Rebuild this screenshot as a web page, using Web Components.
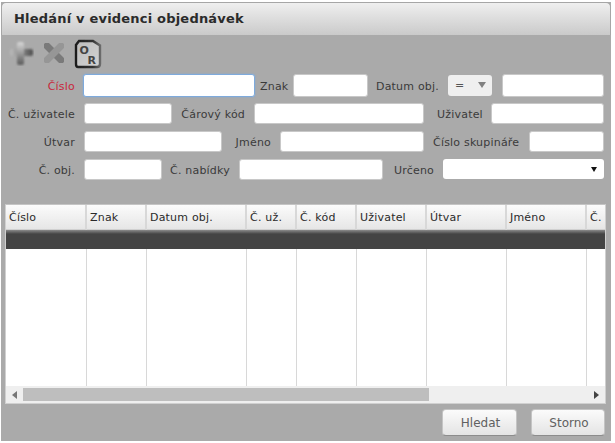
<!DOCTYPE html>
<html>
<head>
<meta charset="utf-8">
<style>
html, body { margin: 0; padding: 0; background: #fff; }
body { font-family: "DejaVu Sans", sans-serif; font-size: 11px; letter-spacing: 0.2px; color: #3a3a3a; }
</style>
</head>
<body>
<search-dialog caption="Hledání v evidenci objednávek">
    <icon-toolbar></icon-toolbar>
    <form-row>
        <form-label width="74" style="color:#c8283c">Číslo</form-label>
        <form-input width="172" tall focused></form-input>
        <form-label gap="5" width="27">Znak</form-label>
        <form-input gap="6" width="75" tall></form-input>
        <form-label gap="8" width="62">Datum obj.</form-label>
        <compare-select gap="10"></compare-select>
        <form-input gap="10" width="102" tall></form-input>
    </form-row>
    <form-row>
        <form-label width="74">Č. uživatele</form-label>
        <form-input gap="9" width="88"></form-input>
        <form-label gap="8" width="65">Čárový kód</form-label>
        <form-input gap="9" width="170"></form-input>
        <form-label gap="13" width="45">Uživatel</form-label>
        <form-input gap="9" width="113"></form-input>
    </form-row>
    <form-row>
        <form-label width="74">Útvar</form-label>
        <form-input gap="9" width="138"></form-input>
        <form-label gap="12" width="37">Jméno</form-label>
        <form-input gap="9" width="144"></form-input>
        <form-label gap="9" width="86">Číslo skupináře</form-label>
        <form-input gap="10" width="75"></form-input>
    </form-row>
    <form-row>
        <form-label width="74">Č. obj.</form-label>
        <form-input gap="9" width="78"></form-input>
        <form-label gap="8" width="59">Č. nabídky</form-label>
        <form-input gap="10" width="144"></form-input>
        <form-label gap="11" width="39">Určeno</form-label>
        <drop-select gap="10" width="161"></drop-select>
    </form-row>
    <result-grid></result-grid>
    <dialog-buttons>
        <dialog-button>Hledat</dialog-button>
        <dialog-button>Storno</dialog-button>
    </dialog-buttons>
</search-dialog>

<script>
const dialog_template = document.createElement("template");
dialog_template.innerHTML = `
<style>
:host { display: block; width: 610px; height: 439px; margin: 2px 0 0 1px; background: #aaaaaa; }
.head {
    box-sizing: border-box;
    height: 33px;
    padding: 0 0 2px 12px;
    display: flex;
    align-items: center;
    border: 1px solid #a6a6a6;
    border-bottom: 0;
    border-radius: 5px 5px 0 0;
    background: linear-gradient(#efefef, #cacaca);
    font: bold 13px "DejaVu Sans", sans-serif;
    letter-spacing: 0.2px;
    color: #2b2b2b;
}
</style>
<div class="head" id="caption"></div>
<slot></slot>
`;

class SearchDialog extends HTMLElement {
    constructor() {
        super();
        this.attachShadow({ mode: "open" }).appendChild(dialog_template.content.cloneNode(true));
    }
    connectedCallback() {
        this.shadowRoot.querySelector("#caption").textContent = this.getAttribute("caption");
    }
}

class IconToolbar extends HTMLElement {
    constructor() {
        super();
        this.attachShadow({ mode: "open" }).innerHTML = `
<style>
:host { display: flex; height: 36px; padding: 0 0 0 7px; align-items: center; gap: 7px; }
svg { display: block; flex: none; }
.doc { margin-top: 2px; }
text { font: bold 11px "DejaVu Sans", sans-serif; letter-spacing: 0; fill: #444; }
</style>
<svg width="26" height="26" viewBox="0 0 26 26">
    <defs>
        <filter id="soft" x="-20%" y="-20%" width="140%" height="140%"><feGaussianBlur stdDeviation="0.8"/></filter>
        <linearGradient id="bar" x1="0" x2="1" y1="0" y2="0"><stop offset="0" stop-color="#bcbcbc"/><stop offset="0.45" stop-color="#8e8e8e"/><stop offset="1" stop-color="#4e4e4e"/></linearGradient>
        <linearGradient id="post" x1="0" x2="0" y1="0" y2="1"><stop offset="0" stop-color="#d8d8d8"/><stop offset="0.45" stop-color="#a0a0a0"/><stop offset="1" stop-color="#5a5a5a"/></linearGradient>
    </defs>
    <g filter="url(#soft)">
        <rect x="2" y="9" width="23" height="7" rx="2" fill="url(#bar)"/>
        <rect x="9" y="2" width="7" height="23" rx="2" fill="url(#post)"/>
    </g>
</svg>
<svg width="26" height="26" viewBox="0 0 26 26">
    <defs>
        <filter id="soft2" x="-20%" y="-20%" width="140%" height="140%"><feGaussianBlur stdDeviation="0.6"/></filter>
    </defs>
    <g filter="url(#soft2)" fill="none" stroke-width="7" stroke-linecap="round">
        <path d="M6 6 L20 20" stroke="#7a7a7a"/>
        <path d="M20 6 L6 20" stroke="#969696"/>
    </g>
</svg>
<svg class="doc" width="28" height="30" viewBox="0 0 28 30">
    <defs>
        <filter id="soft3" x="-10%" y="-10%" width="120%" height="120%"><feGaussianBlur stdDeviation="0.45"/></filter>
        <linearGradient id="paper" x1="0" x2="1" y1="0" y2="1"><stop offset="0" stop-color="#bdbdbd"/><stop offset="1" stop-color="#d2d2d2"/></linearGradient>
        <linearGradient id="edge" x1="0" x2="1" y1="0" y2="0"><stop offset="0" stop-color="#1e1e1e"/><stop offset="0.7" stop-color="#333"/><stop offset="1" stop-color="#6a6a6a"/></linearGradient>
    </defs>
    <path filter="url(#soft3)" d="M5 2 H19 L26 6.5 V25 Q26 28 23 28 H4 Q2 28 2 25 V6 Z" fill="url(#paper)" stroke="url(#edge)" stroke-width="2.4"/>
    <text x="5.5" y="15">O</text>
    <text x="13.5" y="25">R</text>
</svg>`;
    }
}

class FormRow extends HTMLElement {
    constructor() {
        super();
        this.attachShadow({ mode: "open" }).innerHTML = `
<style>
:host { display: flex; align-items: center; height: 28px; }
</style>
<slot></slot>`;
    }
}

class FormLabel extends HTMLElement {
    constructor() {
        super();
        this.attachShadow({ mode: "open" }).innerHTML = `
<style>
:host { display: block; text-align: right; white-space: nowrap; flex: none; padding-top: 2px; }
</style>
<slot></slot>`;
    }
    connectedCallback() {
        this.style.width = this.getAttribute("width") + "px";
        this.style.marginLeft = (this.getAttribute("gap") || 0) + "px";
    }
}

class FormInput extends HTMLElement {
    constructor() {
        super();
        this.attachShadow({ mode: "open" }).innerHTML = `
<style>
:host { display: block; flex: none; margin-left: 8px; }
input {
    display: block;
    box-sizing: border-box;
    width: 100%;
    height: 21px;
    margin: 0;
    padding: 0 4px;
    background: #fff;
    border: 1px solid #c8c8c8;
    border-radius: 3px;
    outline: 0;
}
:host([tall]) input { height: 23px; }
:host([focused]) input { border-color: #7eaadc; box-shadow: 0 0 2px #7eaadc; }
</style>
<input type="text">`;
    }
    connectedCallback() {
        this.style.width = this.getAttribute("width") + "px";
        if (this.hasAttribute("gap")) this.style.marginLeft = this.getAttribute("gap") + "px";
    }
}

class CompareSelect extends HTMLElement {
    constructor() {
        super();
        this.attachShadow({ mode: "open" }).innerHTML = `
<style>
:host { display: flex; flex: none; align-items: center; justify-content: space-between; box-sizing: border-box; width: 44px; height: 21px; padding: 0 6px 0 7px; background: #efefef; border-radius: 3px; color: #555; }
i { border: 4px solid transparent; border-top: 6px solid #808080; border-bottom: 0; }
</style>
<span>=</span><i></i>`;
    }
    connectedCallback() {
        this.style.marginLeft = this.getAttribute("gap") + "px";
    }
}

class DropSelect extends HTMLElement {
    constructor() {
        super();
        this.attachShadow({ mode: "open" }).innerHTML = `
<style>
:host { display: flex; flex: none; align-items: center; justify-content: flex-end; box-sizing: border-box; height: 20px; padding-right: 7px; background: #fff; border-radius: 3px; }
i { border: 3px solid transparent; border-top: 5px solid #111; border-bottom: 0; }
</style>
<i></i>`;
    }
    connectedCallback() {
        this.style.width = this.getAttribute("width") + "px";
        this.style.marginLeft = this.getAttribute("gap") + "px";
    }
}

const grid_columns = [
    ["Číslo", 81], ["Znak", 60], ["Datum obj.", 100], ["Č. už.", 50], ["Č. kód", 60],
    ["Uživatel", 70], ["Útvar", 80], ["Jméno", 80], ["Č.", 18]
];

class ResultGrid extends HTMLElement {
    constructor() {
        super();
        const cols = grid_columns.map(c => c[1] + "px").join(" ");
        this.attachShadow({ mode: "open" }).innerHTML = `
<style>
:host { display: block; box-sizing: border-box; width: 601px; height: 200px; margin: 21px 0 0 4px; background: #fff; border: 1px solid #d0d0d0; border-top-color: #c4c4c4; }
.cols { display: grid; grid-template-columns: ${cols}; height: 181px; overflow: hidden; }
.title { box-sizing: border-box; height: 25px; padding: 1px 0 0 3px; display: flex; align-items: center; background: linear-gradient(#fbfbfb, #e6e6e6); border-right: 1px solid #d8d8d8; border-bottom: 1px solid #d0d0d0; overflow: hidden; white-space: nowrap; color: #2a2a2a; }
.cell { display: flex; flex-direction: column; border-right: 1px solid #d8d8d8; box-sizing: border-box; }
.cell:last-child, .cell:last-child .title { border-right: 0; }
.row { height: 19px; background: linear-gradient(#8a8a8a, #444 4px, #444); margin-right: -1px; }
.bar { display: flex; height: 17px; background: #efefef; align-items: center; }
.arrow { flex: none; width: 17px; display: flex; justify-content: center; }
.left { border: 4px solid transparent; border-right: 5px solid #777; border-left: 0; }
.right { border: 4px solid transparent; border-left: 5px solid #444; border-right: 0; }
.track { flex: 1; height: 13px; }
.thumb { width: 406px; height: 13px; background: #bebebe; }
</style>
<div class="cols">
${grid_columns.map(c => `<div class="cell"><div class="title">${c[0]}</div><div class="row"></div></div>`).join("")}
</div>
<div class="bar">
    <div class="arrow"><i class="left"></i></div>
    <div class="track"><div class="thumb"></div></div>
    <div class="arrow"><i class="right"></i></div>
</div>`;
    }
}

class DialogButtons extends HTMLElement {
    constructor() {
        super();
        this.attachShadow({ mode: "open" }).innerHTML = `
<style>
:host { display: flex; justify-content: flex-end; gap: 14px; padding: 5px 6px 0 0; }
</style>
<slot></slot>`;
    }
}

class DialogButton extends HTMLElement {
    constructor() {
        super();
        this.attachShadow({ mode: "open" }).innerHTML = `
<style>
:host { display: flex; align-items: center; justify-content: center; box-sizing: border-box; width: 75px; height: 27px; padding-left: 2px; font-size: 12px; letter-spacing: 0; color: #606060; background: linear-gradient(#fbfbfb, #e4e4e4); border: 1px solid #c4c4c4; border-bottom-color: #8c8c8c; border-radius: 4px; }
:host(:last-child) { width: 74px; }
</style>
<slot></slot>`;
    }
}

customElements.define("search-dialog", SearchDialog);
customElements.define("icon-toolbar", IconToolbar);
customElements.define("form-row", FormRow);
customElements.define("form-label", FormLabel);
customElements.define("form-input", FormInput);
customElements.define("compare-select", CompareSelect);
customElements.define("drop-select", DropSelect);
customElements.define("result-grid", ResultGrid);
customElements.define("dialog-buttons", DialogButtons);
customElements.define("dialog-button", DialogButton);
</script>
</body>
</html>
